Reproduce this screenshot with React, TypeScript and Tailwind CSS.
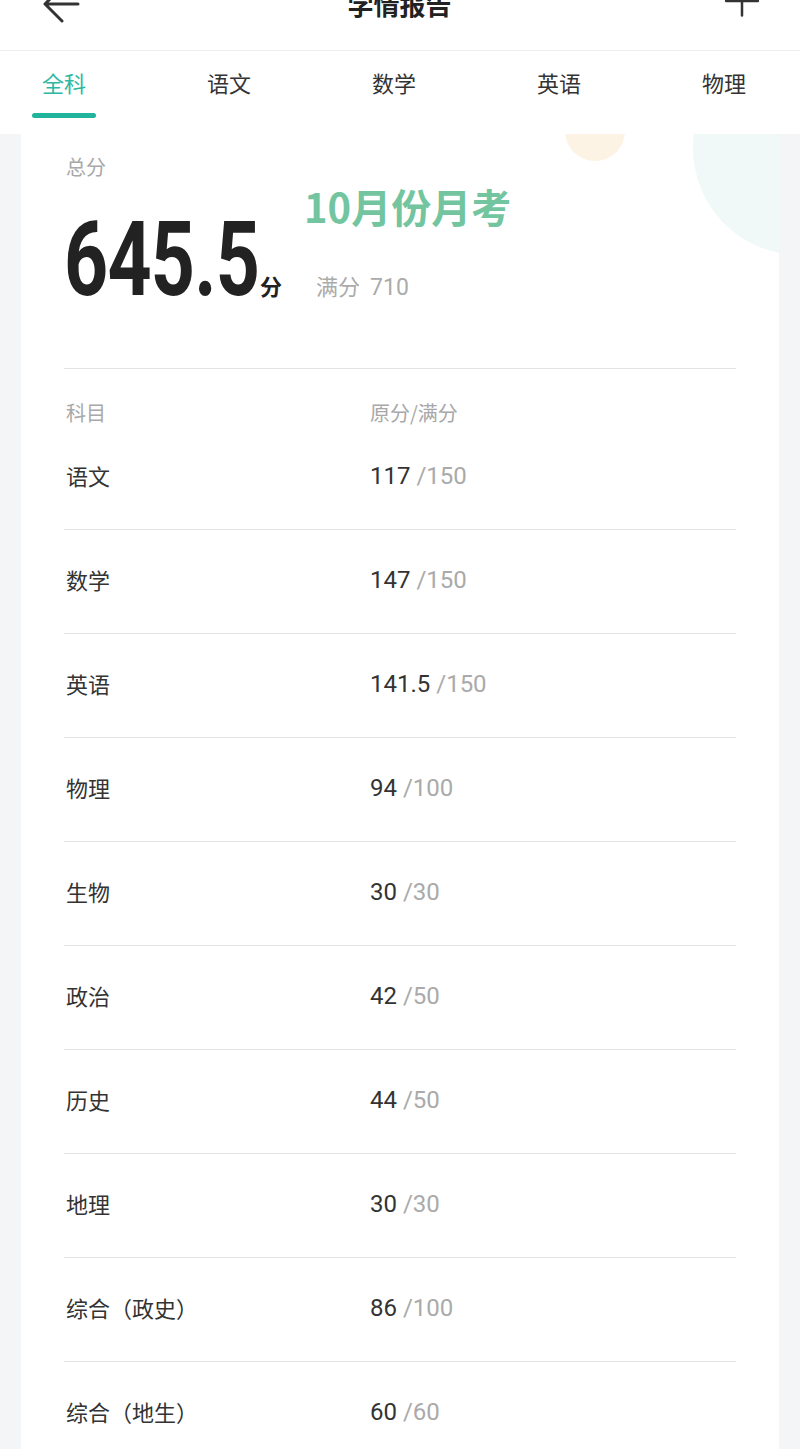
const tabs = ['全科', '语文', '数学', '英语', '物理']

interface ScoreRow {
  subject: string
  score: string
  full: string
}

const rows: ScoreRow[] = [
  { subject: '语文', score: '117', full: '150' },
  { subject: '数学', score: '147', full: '150' },
  { subject: '英语', score: '141.5', full: '150' },
  { subject: '物理', score: '94', full: '100' },
  { subject: '生物', score: '30', full: '30' },
  { subject: '政治', score: '42', full: '50' },
  { subject: '历史', score: '44', full: '50' },
  { subject: '地理', score: '30', full: '30' },
  { subject: '综合（政史）', score: '86', full: '100' },
  { subject: '综合（地生）', score: '60', full: '60' },
]

const cjk = "font-['Noto_Sans_CJK_SC',sans-serif]"
const num = "font-['Roboto','Noto_Sans_CJK_SC',sans-serif]"

export default function App() {
  return (
    <div className={`w-[800px] h-[1449px] overflow-hidden bg-[#f4f5f7] ${cjk}`}>
      {/* top bar, partly scrolled out of view */}
      <div className="-mt-[43px] h-[94px] bg-white border-b border-[#eeeeee] grid grid-cols-[1fr_auto_1fr] items-center px-[40px] pr-[41px]">
        <svg width="40" height="40" viewBox="0 0 40 40" fill="none" stroke="#333" strokeWidth="3" strokeLinecap="round" strokeLinejoin="round">
          <path d="M5 20H38M5 20L22 37M5 20L22 3" />
        </svg>
        <div className="text-[26px] font-bold text-[#222] leading-none">学情报告</div>
        <div className="flex justify-end">
          <svg width="34" height="34" viewBox="0 0 34 34" fill="none" stroke="#333" strokeWidth="2.5" strokeLinecap="round">
            <path d="M17 0V28.5M1 14H33" />
          </svg>
        </div>
      </div>

      {/* subject tabs */}
      <div className="bg-white flex pl-[32px] gap-[101px] pt-[16px] pb-[16px]">
        {tabs.map((t, i) => (
          <div key={t} className="w-[64px] flex flex-col items-center">
            <span className={`text-[22px] leading-[30px] ${i === 0 ? 'text-[#2cb9a1]' : 'text-[#333]'}`}>{t}</span>
            <span className={`mt-[16px] h-[5px] w-[64px] rounded-full ${i === 0 ? 'bg-[#1fb49b]' : 'bg-transparent'}`} />
          </div>
        ))}
      </div>

      {/* report card */}
      <div className="relative mx-[21px] bg-white overflow-hidden px-[43px] pt-[19px]">
        <div className="absolute left-[544px] -top-[33px] w-[60px] h-[60px] rounded-full bg-[#fdf3e4]" />
        <div className="absolute left-[672px] top-[-93px] w-[214px] h-[214px] rounded-full bg-[#f0f9f7]" />

        <div className="relative flex items-start">
          <div className="flex flex-col">
            <span className="text-[20px] leading-[28px] text-[#a8a8a8] pl-[2px]">总分</span>
            <div className="mt-[27px] flex items-baseline">
              <div className="w-[196px] h-[104px]">
                <span className="inline-block origin-left scale-x-[0.74] font-['Roboto',sans-serif] font-bold text-[104px] leading-none text-[#222] tracking-[-1px]">
                  645.5
                </span>
              </div>
              <span className="text-[22px] font-bold text-[#222] leading-none">分</span>
            </div>
          </div>
          <div className="ml-[22px] flex flex-col">
            <span className="mt-[31px] text-[40px] leading-[44px] font-bold text-[#72c59f]">10月份月考</span>
            <span className="ml-[12px] mt-[42px] text-[22px] leading-[30px] text-[#ababab]">
              满分<span className={`${num} ml-[10px] text-[23px]`}>710</span>
            </span>
          </div>
        </div>

        <div className="relative mt-[56px] border-t border-[#e3e3e3]" />

        <div className="relative mt-[31px] flex text-[20px] leading-[26px] text-[#a8a8a8] pl-[2px]">
          <span className="w-[304px]">科目</span>
          <span>原分/满分</span>
        </div>

        {rows.map((r) => (
          <div key={r.subject} className="h-[104px] border-b border-[#e3e3e3] flex items-center pb-[3px] pl-[2px] text-[22px]">
            <span className="w-[304px] text-[#333] -mt-[2px]">{r.subject}</span>
            <span className={`${num} text-[24px]`}>
              <span className="text-[#333]">{r.score}</span>
              <span className="text-[#aaaaaa]"> /{r.full}</span>
            </span>
          </div>
        ))}
      </div>
    </div>
  )
}
